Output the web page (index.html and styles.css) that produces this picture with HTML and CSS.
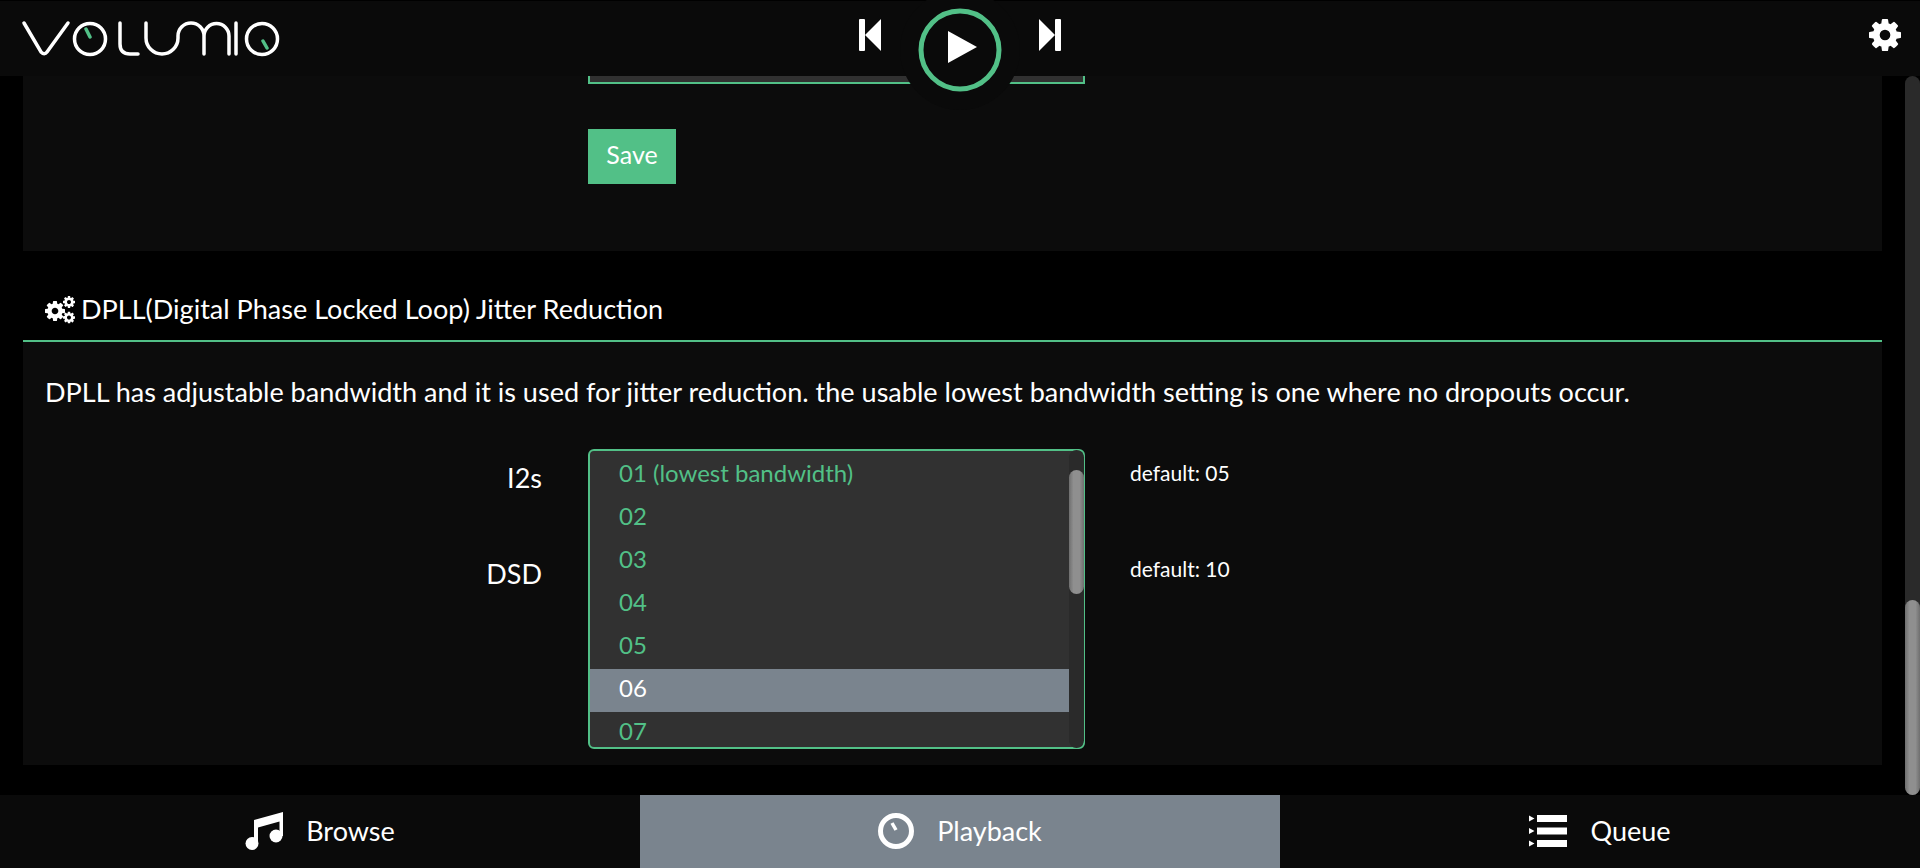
FILE: index.html
```html
<!DOCTYPE html>
<html lang="en">
<head>
  <meta charset="UTF-8">
  <title>Volumio</title>
  <link rel="stylesheet" href="styles.css">
</head>
<body>
  <svg class="defs" width="0" height="0">
    <symbol id="cog" viewBox="128 128 1536 1536">
      <path d="M1152 896q0-106-75-181t-181-75-181 75-75 181 75 181 181 75 181-75 75-181zm512-109v222q0 12-8 23t-20 13l-185 28q-19 54-39 91 35 50 107 138 10 12 10 25t-9 23q-27 37-99 108t-94 71q-12 0-26-9l-138-108q-44 23-91 38-16 136-29 186-7 28-36 28h-222q-14 0-24.500-8.500t-11.500-21.500l-28-184q-49-16-90-37l-141 107q-10 9-25 9-14 0-25-11-126-114-165-168-7-10-7-23 0-12 8-23 15-21 51-66.500t54-70.500q-27-50-41-99l-183-27q-13-2-21-12.500t-8-23.500v-222q0-12 8-23t19-13l186-28q14-46 39-92-40-57-107-138-10-12-10-24 0-10 9-23 26-36 98.500-107.500t94.500-71.500q13 0 26 10l138 107q44-23 91-38 16-136 29-186 7-28 36-28h222q14 0 24.500 8.500t11.500 21.500l28 184q49 16 90 37l142-107q9-9 24-9 13 0 25 10 129 119 165 170 7 8 7 22 0 12-8 23-15 21-51 66.500t-54 70.500q26 50 41 98l183 28q13 2 21 12.500t8 23.500z"/>
    </symbol>
  </svg>

  <header class="topbar">
    <svg class="logo" width="290" height="76" viewBox="0 0 290 76" fill="none" stroke="#fff" stroke-width="3.500" stroke-linecap="round">
      <path d="M24 23 41 52q3.500 3.500 6 0L68 23"/>
      <circle cx="90" cy="39" r="15.500"/>
      <path d="M120 23V44q0 10 10 10h8"/>
      <path d="M146 23V38a16 16 0 0 0 32 0V36a13 13 0 0 1 26 0V54M204 36a12.500 12.500 0 0 1 25 0V54"/>
      <path d="M236 23V54"/>
      <circle cx="262" cy="39" r="15.500"/>
      <path d="M86 29 90 37M263 41 267 48" stroke="#52c087"/>
    </svg>
    <div class="transport">
      <svg class="skip" width="22" height="32" viewBox="0 0 22 32" fill="#fff"><rect width="6" height="32" rx="1"/><path d="M6 16 22 0V32Z"/></svg>
      <svg class="skip skip-next" width="22" height="32" viewBox="0 0 22 32" fill="#fff"><rect x="16" width="6" height="32" rx="1"/><path d="M16 16 0 0V32Z"/></svg>
    </div>
    <svg class="settings" width="32" height="32"><use href="#cog"/></svg>
  </header>

  <div class="play-wrap">
    <svg class="play" width="84" height="84" viewBox="0 0 84 84">
      <circle cx="42" cy="42" r="39" fill="none" stroke="#52c087" stroke-width="5"/>
      <path d="M30 23 59 39 30 55Z" fill="#fff"/>
    </svg>
  </div>

  <main class="content">
    <section class="panel panel-upper">
      <div class="select-tail"></div>
      <button class="save-btn">Save</button>
    </section>

    <h2 class="section-title">
      <svg class="cogs" width="30" height="28" viewBox="0 0 30 28">
        <use href="#cog" x="0" y="5" width="20" height="20"/>
        <use href="#cog" x="18" y="0" width="12" height="12"/>
        <use href="#cog" x="18" y="15.500" width="12" height="12"/>
      </svg>
      DPLL(Digital Phase Locked Loop) Jitter Reduction
    </h2>

    <section class="panel panel-dpll">
      <p class="section-desc">DPLL has adjustable bandwidth and it is used for jitter reduction. the usable lowest bandwidth setting is one where no dropouts occur.</p>
      <div class="form-row">
        <label class="form-label">I2s</label>
        <div class="form-control">
          <div class="dropdown">
            <ul class="dropdown-list">
              <li>01 (lowest bandwidth)</li>
              <li>02</li>
              <li>03</li>
              <li>04</li>
              <li>05</li>
              <li class="selected">06</li>
              <li>07</li>
            </ul>
            <div class="scroll-track inner-track"><div class="scroll-thumb inner-thumb"></div></div>
          </div>
        </div>
        <span class="form-hint">default: 05</span>
      </div>
      <div class="form-row">
        <label class="form-label">DSD</label>
        <div class="form-control"></div>
        <span class="form-hint">default: 10</span>
      </div>
    </section>

    <div class="scroll-track page-track"><div class="scroll-thumb page-thumb"></div></div>
  </main>

  <nav class="tabs">
    <a class="tab">
      <svg width="38" height="38" viewBox="0 0 38 38" fill="#fff">
        <circle cx="7" cy="31.500" r="6.500"/><circle cx="31" cy="24" r="6.500"/>
        <path d="M9 8 38 0V24H34.500V9.500L13 15.500V32H9Z"/>
      </svg>
      Browse
    </a>
    <a class="tab active">
      <svg width="36" height="36" viewBox="0 0 36 36" fill="none" stroke="#fff">
        <circle cx="18" cy="18" r="15.500" stroke-width="5"/>
        <path d="M14 10 18 17" stroke-width="3.500"/>
      </svg>
      Playback
    </a>
    <a class="tab">
      <svg width="38" height="32" viewBox="0 0 38 32" fill="#fff">
        <path d="M0 .5 5.500 3.500 0 6.500ZM0 13 5.500 16 0 19ZM0 25.500 5.500 28.500 0 31.500Z"/>
        <rect x="8" y="0" width="30" height="7"/><rect x="8" y="12.500" width="30" height="7"/><rect x="8" y="25" width="30" height="7"/>
      </svg>
      Queue
    </a>
  </nav>
</body>
</html>
```

FILE: styles.css
```css
* {
  box-sizing: border-box;
}

html, body {
  height: 100%;
  margin: 0;
}

body {
  display: flex;
  flex-direction: column;
  background-color: #000;
  color: #fff;
  font-family: Lato, "Open Sans", sans-serif;
  overflow: hidden;
}

.defs {
  position: absolute;
}

/* Top bar */
.topbar {
  height: 76px;
  flex: none;
  display: flex;
  align-items: flex-start;
  justify-content: space-between;
  background-color: #0a0a0a;
  border-top: 1px solid #000;
  position: relative;
  z-index: 2;
}

.logo {
  margin-top: -1px;
}

.transport {
  position: absolute;
  left: 859px;
  top: 18px;
  width: 202px;
  display: flex;
  justify-content: space-between;
}

.settings {
  fill: #fff;
  margin: 18px 19px 0 0;
}

.play-wrap {
  position: absolute;
  left: 900px;
  top: -10px;
  width: 120px;
  height: 120px;
  border-radius: 50%;
  background-color: #0a0a0a;
  display: flex;
  align-items: center;
  justify-content: center;
  z-index: 3;
}

/* Settings content */
.content {
  flex: 1;
  min-height: 0;
  position: relative;
  overflow: hidden;
  padding: 0 38px 0 23px;
}

.panel {
  background-color: #0c0c0c;
}

.panel-upper {
  height: 175px;
  padding-left: 565px;
}

.select-tail {
  width: 497px;
  height: 8px;
  background-color: #313131;
  border: 2px solid #52c087;
  border-top: none;
}

.save-btn {
  display: block;
  width: 88px;
  height: 55px;
  margin-top: 45px;
  padding: 0 0 5px;
  border: none;
  background-color: #52c087;
  color: #fff;
  font-family: inherit;
  font-size: 25px;
}

.section-title {
  height: 91px;
  margin: 0;
  padding: 40px 0 0 22px;
  display: flex;
  align-items: flex-start;
  gap: 6px;
  border-bottom: 2px solid #52c087;
  font-size: 27.050px;
  font-weight: 400;
  line-height: 36px;
}

.cogs {
  fill: #fff;
  margin-top: 5px;
}

.panel-dpll {
  height: 423px;
  padding: 29px 0 0 22px;
}

.section-desc {
  margin: 0 0 35px;
  font-size: 27.050px;
  line-height: 42px;
}

.form-row {
  display: grid;
  grid-template-columns: 497px 497px auto;
  column-gap: 46px;
  height: 96px;
}

.form-label {
  text-align: right;
  font-size: 27px;
  line-height: 59px;
}

.form-control {
  position: relative;
}

.form-hint {
  margin-left: -1px;
  font-size: 21px;
  line-height: 49px;
}

/* Open dropdown lies over the rows below it */
.dropdown {
  position: absolute;
  left: 0;
  top: 1px;
  width: 497px;
  height: 300px;
  display: flex;
  background-color: #313131;
  border: 2px solid #52c087;
  border-radius: 6px;
  z-index: 1;
}

.dropdown-list {
  flex: 1;
  margin: 0;
  padding: 3px 0 0;
  overflow: hidden;
  list-style: none;
  color: #52c087;
  font-size: 24px;
}

.dropdown-list li {
  height: 43px;
  padding-left: 29px;
  line-height: 38px;
}

.dropdown-list .selected {
  background-color: #7a848e;
  color: #fff;
}

.scroll-track {
  width: 15px;
  background-color: #2a2a2a;
  border-radius: 8px;
  position: relative;
}

.inner-track {
  margin: -1px -1px -1px 0;
}

.scroll-thumb {
  position: absolute;
  left: 0;
  width: 15px;
  border-radius: 8px;
  background: linear-gradient(to right, #6f6f6f, #8f8f8f 30%, #8f8f8f 70%, #6f6f6f);
}

.inner-thumb {
  top: 20px;
  height: 124px;
}

.page-track {
  position: absolute;
  right: 0;
  top: 0;
  bottom: 0;
}

.page-thumb {
  top: 524px;
  bottom: 0;
}

/* Bottom tabs */
.tabs {
  height: 73px;
  flex: none;
  display: grid;
  grid-template-columns: repeat(3, 1fr);
  background-color: #0a0a0a;
}

.tab {
  display: flex;
  align-items: center;
  justify-content: center;
  gap: 23px;
  padding-bottom: 2px;
  font-size: 27px;
}

.tab.active {
  background-color: #7a848e;
}
```
